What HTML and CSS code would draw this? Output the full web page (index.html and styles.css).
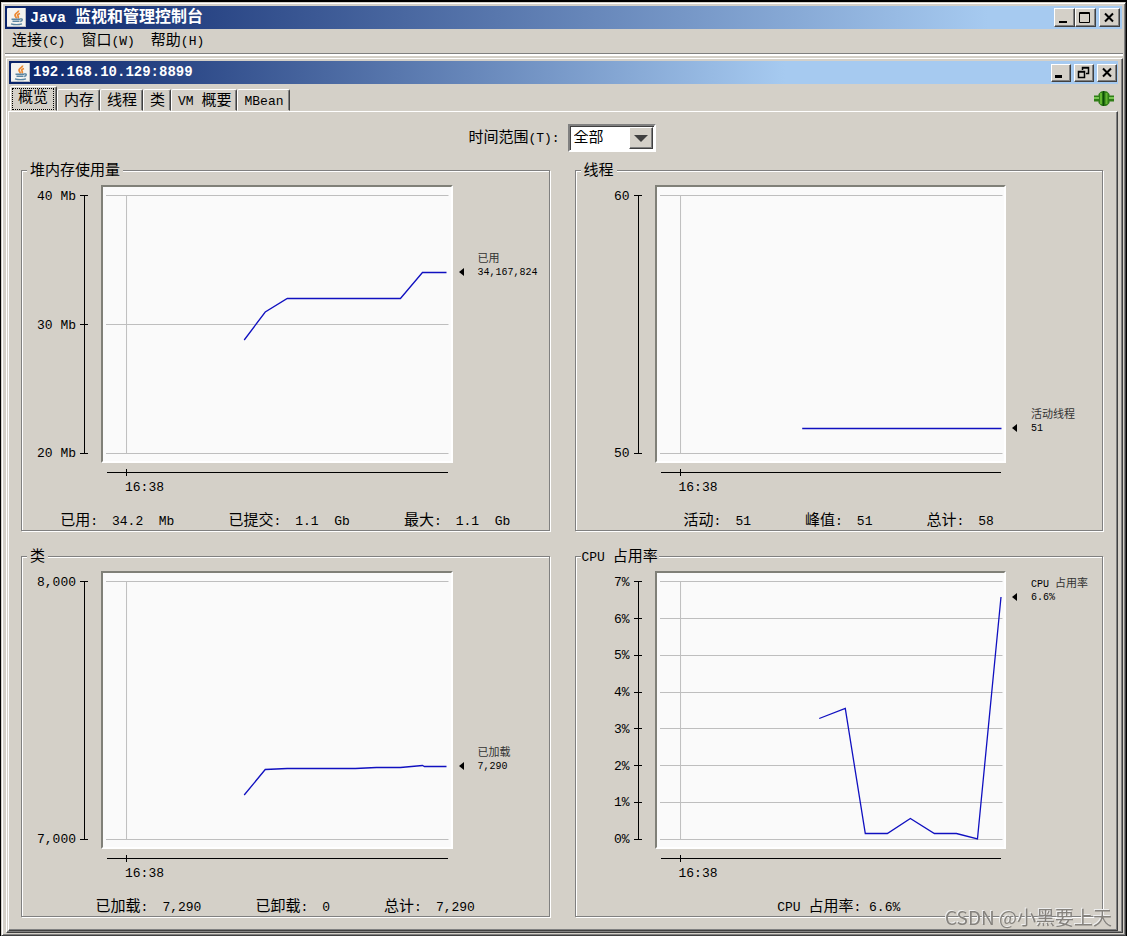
FILE: index.html
```html
<!DOCTYPE html>
<html lang="zh-CN">
<head>
<meta charset="utf-8">
<title>Java 监视和管理控制台</title>
<link rel="stylesheet" href="styles.css">
</head>
<body>
<svg class="defs" aria-hidden="true">
  <symbol id="java" viewBox="0 0 19 19">
    <rect width="19" height="19" rx="1" fill="#f3f3f0"/>
    <path d="M0 18.500h19M18.500 0v19" stroke="#b9bcc4"/>
    <path d="M11.500 2.500c.5 2.200-4.500 2.800-3.300 5.300.4.900 1.300 1.400.8 2.500M13 5.500c-2.300.6-2.800 1.800-1.800 3 .4.700.2 1.200-.5 1.800" fill="none" stroke="#ec8a34" stroke-width="1.800"/>
    <path d="M4.500 11.300h8.500M5.500 13.300h7M13 11c3-.6 3 1.600.2 2.500M4 15.800c3 .9 8 .9 11 0" fill="none" stroke="#5b86a2" stroke-width="1.400"/>
  </symbol>
</svg>
<div class="window">
  <header class="titlebar">
    <svg class="logo"><use href="#java"/></svg>
    <h1>Java <span class="big">监视和管理控制台</span></h1>
    <button type="button" aria-label="最小化"><svg viewBox="0 0 16 15"><path d="M3 12h8" stroke="#000" stroke-width="2"/></svg></button>
    <button type="button" aria-label="最大化"><svg viewBox="0 0 16 15"><path d="M2.500 2.500h10v10h-10zM2 3.500h11" fill="none" stroke="#000"/></svg></button>
    <button type="button" class="close" aria-label="关闭"><svg viewBox="0 0 16 15"><path d="M4 3.500l8 8M12 3.500l-8 8" stroke="#000" stroke-width="2"/></svg></button>
  </header>
  <nav class="menu">
    <button type="button">连接<span class="m">(C)</span></button>
    <button type="button">窗口<span class="m">(W)</span></button>
    <button type="button">帮助<span class="m">(H)</span></button>
  </nav>
  <main class="frame">
    <header class="titlebar inner">
      <svg class="logo"><use href="#java"/></svg>
      <h2>192.168.10.129:8899</h2>
      <button type="button" aria-label="最小化"><svg viewBox="0 0 16 13"><path d="M2 10.500h7" stroke="#000" stroke-width="3"/></svg></button>
      <button type="button" aria-label="还原"><svg viewBox="0 0 16 13"><path d="M6.500 4V1.500h6v6H10M6 2h7M2.500 5.500h6v6h-6zM2 6h7" fill="none" stroke="#000" stroke-width="1.500"/></svg></button>
      <button type="button" aria-label="关闭"><svg viewBox="0 0 16 13"><path d="M4 2.500l8 8M12 2.500l-8 8" stroke="#000" stroke-width="2"/></svg></button>
    </header>
    <nav class="tabs" role="tablist">
      <button type="button" role="tab" aria-selected="true" class="on"><span class="focus">概览</span></button>
      <button type="button" role="tab">内存</button>
      <button type="button" role="tab">线程</button>
      <button type="button" role="tab">类</button>
      <button type="button" role="tab"><span class="m">VM </span>概要</button>
      <button type="button" role="tab"><span class="m">MBean</span></button>
      <svg class="plug" viewBox="0 0 20 15">
        <path d="M0 4.500h4.500V3L7 .5Q10-.5 13 .5L15.500 3v1.500H20v6h-4.500V12L13 14.500q-3 1-6 0L4.500 12v-1.500H0z" fill="#2f7d17"/>
        <path d="M0 7h5M15 7h5" stroke="#79c653" stroke-width="2"/>
        <path d="M7 2v11M12.500 2v11" stroke="#62b530" stroke-width="2"/>
        <path d="M9.500 0v15" stroke="#0c4b06" stroke-width="1.500"/>
      </svg>
    </nav>
    <div class="pane">
      <div class="range">
        <label for="range">时间范围<span class="m">(T):</span></label>
        <span class="combo">
          <select id="range"><option>全部</option></select>
          <span class="drop"><svg viewBox="0 0 14 7"><path d="M0 0h14L7 7z" fill="#404040"/></svg></span>
        </span>
      </div>
      <div class="charts">
        <fieldset>
          <legend>堆内存使用量</legend>
          <div class="chart">
            <div class="yaxis">
              <div class="ylabels"><span>40 Mb</span><span>30 Mb</span><span>20 Mb</span></div>
              <svg class="axis"><path d="M4.500 0v2000"/><line x1="0" x2="8" y1="0.500" y2="0.500"/><line x1="0" x2="8" y1="50%" y2="50%"/><line class="end" x1="0" x2="8" y1="100%" y2="100%"/></svg>
            </div>
            <div class="plot"><svg viewBox="0 0 347 274" preserveAspectRatio="none">
              <path class="grid" d="M3 8.500h342M3 137.500h342M3 266.500h342M23.500 8v258"/>
              <polyline points="141,153 162,125 184,111.500 297,111.500 319,85.500 343,85.500"/>
            </svg></div>
            <div class="side" style="padding-top:68px"><svg viewBox="0 0 5 8"><path d="M5 0v8L0 4z"/></svg><p><span class="name">已用</span><br>34,167,824</p></div>
            <div class="xaxis"><div class="xline"></div><span>16:38</span></div>
          </div>
          <dl class="stats">
            <div><dt>已用<span class="m">:</span></dt><dd>34.2  Mb</dd></div>
            <div><dt>已提交<span class="m">:</span></dt><dd>1.1  Gb</dd></div>
            <div><dt>最大<span class="m">:</span></dt><dd>1.1  Gb</dd></div>
          </dl>
        </fieldset>

        <fieldset>
          <legend>线程</legend>
          <div class="chart">
            <div class="yaxis">
              <div class="ylabels"><span>60</span><span>50</span></div>
              <svg class="axis"><path d="M4.500 0v2000"/><line x1="0" x2="8" y1="0.500" y2="0.500"/><line class="end" x1="0" x2="8" y1="100%" y2="100%"/></svg>
            </div>
            <div class="plot"><svg viewBox="0 0 347 274" preserveAspectRatio="none">
              <path class="grid" d="M3 8.500h342M3 266.500h342M23.500 8v258"/>
              <polyline points="145,241.500 344,241.500"/>
            </svg></div>
            <div class="side" style="padding-top:224px"><svg viewBox="0 0 5 8"><path d="M5 0v8L0 4z"/></svg><p><span class="name">活动线程</span><br>51</p></div>
            <div class="xaxis"><div class="xline"></div><span>16:38</span></div>
          </div>
          <dl class="stats">
            <div><dt>活动<span class="m">:</span></dt><dd>51</dd></div>
            <div><dt>峰值<span class="m">:</span></dt><dd>51</dd></div>
            <div><dt>总计<span class="m">:</span></dt><dd>58</dd></div>
          </dl>
        </fieldset>

        <fieldset>
          <legend>类</legend>
          <div class="chart">
            <div class="yaxis">
              <div class="ylabels"><span>8,000</span><span>7,000</span></div>
              <svg class="axis"><path d="M4.500 0v2000"/><line x1="0" x2="8" y1="0.500" y2="0.500"/><line class="end" x1="0" x2="8" y1="100%" y2="100%"/></svg>
            </div>
            <div class="plot"><svg viewBox="0 0 347 274" preserveAspectRatio="none">
              <path class="grid" d="M3 8.500h342M3 266.500h342M23.500 8v258"/>
              <polyline points="141,222 162,196.500 184,195.500 252,195.500 273,194.500 297,194.500 319,192.500 321,193.500 343,193.500"/>
            </svg></div>
            <div class="side" style="padding-top:176px"><svg viewBox="0 0 5 8"><path d="M5 0v8L0 4z"/></svg><p><span class="name">已加载</span><br>7,290</p></div>
            <div class="xaxis"><div class="xline"></div><span>16:38</span></div>
          </div>
          <dl class="stats">
            <div><dt>已加载<span class="m">:</span></dt><dd>7,290</dd></div>
            <div><dt>已卸载<span class="m">:</span></dt><dd>0</dd></div>
            <div><dt>总计<span class="m">:</span></dt><dd>7,290</dd></div>
          </dl>
        </fieldset>

        <fieldset>
          <legend class="wide"><span class="m">CPU </span>占用率</legend>
          <div class="chart">
            <div class="yaxis">
              <div class="ylabels"><span>7%</span><span>6%</span><span>5%</span><span>4%</span><span>3%</span><span>2%</span><span>1%</span><span>0%</span></div>
              <svg class="axis"><path d="M4.500 0v2000"/><line x1="0" x2="8" y1="0.500" y2="0.500"/><line x1="0" x2="8" y1="14.300%" y2="14.300%"/><line x1="0" x2="8" y1="28.600%" y2="28.600%"/><line x1="0" x2="8" y1="42.900%" y2="42.900%"/><line x1="0" x2="8" y1="57.100%" y2="57.100%"/><line x1="0" x2="8" y1="71.400%" y2="71.400%"/><line x1="0" x2="8" y1="85.700%" y2="85.700%"/><line class="end" x1="0" x2="8" y1="100%" y2="100%"/></svg>
            </div>
            <div class="plot"><svg viewBox="0 0 347 274" preserveAspectRatio="none">
              <path class="grid" d="M3 8.500h342M3 45.500h342M3 82.500h342M3 119.500h342M3 155.500h342M3 192.500h342M3 229.500h342M3 266.500h342M23.500 8v258"/>
              <polyline points="162,145.500 188,135.500 208,260.500 230,260.500 253,245.500 277,260.500 299,260.500 320,266 343.500,24"/>
            </svg></div>
            <div class="side" style="padding-top:7px"><svg viewBox="0 0 5 8"><path d="M5 0v8L0 4z"/></svg><p>CPU <span class="name">占用率</span><br>6.6%</p></div>
            <div class="xaxis"><div class="xline"></div><span>16:38</span></div>
          </div>
          <p class="stats"><span><span class="m">CPU </span>占用率<span class="m">: 6.6%</span></span></p>
        </fieldset>
      </div>
    </div>
  </main>
</div>
<div class="watermark">CSDN @小黑要上天</div>
</body>
</html>
```
FILE: styles.css
```css
* { box-sizing: border-box; }
body {
  margin: 0;
  min-height: 100vh;
  display: flex;
  padding: 2px 1px 0 1px;
  background: #000;
  color: #000;
  font: 15px/18px "Liberation Mono", "Noto Sans CJK SC", monospace;
}
h1, h2, p, dl, dd { margin: 0; }
button, select { font: inherit; color: inherit; }
.defs { position: absolute; width: 0; height: 0; }
.m { font-size: 13px; white-space: pre; }

.window {
  flex: 1;
  display: flex;
  flex-direction: column;
  padding: 2px 2px 0 3px;
  background: #d4d0c8;
  border: 1px solid;
  border-color: #d4d0c8 #404040 #404040 #d4d0c8;
  box-shadow: inset 1px 1px #fff, inset -1px -1px #808080;
}
.titlebar {
  display: flex;
  align-items: center;
  height: 23px;
  margin: 1px 1px 0 0;
  padding: 0 2px;
  background: linear-gradient(90deg, #0a246a, #a6caf0 88%);
  color: #fff;
}
.logo { width: 19px; height: 19px; }
.titlebar h1, .titlebar h2 { flex: 1; padding: 2px 4px 0; font-size: 15px; line-height: 20px; }
.titlebar h2 { padding: 0 3px 2px; font-size: 14px; }
.big { font-size: 16px; }
.titlebar button {
  width: 21px;
  height: 19px;
  padding: 0;
  background: #d4d0c8;
  border: 1px solid;
  border-color: #fff #404040 #404040 #fff;
  box-shadow: inset -1px -1px #808080;
}
.titlebar button svg { display: block; width: 16px; height: 15px; margin: 1px; }
.titlebar .close { margin-left: 3px; }
.inner { margin: 1px 0 0 1px; padding-right: 1px; background: linear-gradient(90deg, #0a246a, #a6caf0 70%); }
.titlebar.inner button { width: 20px; height: 18px; margin-left: 3px; }
.titlebar.inner button svg { height: 13px; }

.menu {
  display: flex;
  gap: 16px;
  height: 25px;
  padding: 3px 7px 0;
  border-bottom: 1px solid #808080;
  box-shadow: 0 2px #fff;
}
.menu button { padding: 0; border: 0; background: none; line-height: 20px; height: 20px; }

.frame {
  flex: 1;
  display: flex;
  flex-direction: column;
  margin: 4px 0 2px 1px;
  padding: 1px 4px 1px 1px;
  border: 1px solid;
  border-color: #fff #404040 #404040 #fff;
  box-shadow: inset -1px -1px #808080;
}
.tabs { display: flex; align-items: flex-end; height: 27px; padding-left: 2px; }
.tabs button {
  height: 22px;
  padding: 2px 5px 0 6px;
  line-height: 20px;
  background: #d4d0c8;
  border: 1px solid;
  border-color: #fff #404040 transparent #fff;
  border-radius: 2px 2px 0 0;
  box-shadow: inset -1px 0 #808080;
}
.tabs .on { height: 25px; padding: 1px 2px 2px 1px; }
.focus { display: block; height: 22px; padding: 1px 5px; border: 1px dotted #000; line-height: 18px; }
.plug { width: 20px; height: 15px; margin: 0 4px 5px auto; }

.pane {
  flex: 1;
  padding: 12px 14px 10px 12px;
  border: 1px solid;
  border-color: #fff #404040 #404040 #fff;
  box-shadow: inset -1px -1px #808080;
}
.range { display: flex; justify-content: center; align-items: center; gap: 8px; height: 28px; }
.range label { padding-top: 2px; }
.combo { position: relative; }
.combo select {
  display: block;
  width: 88px;
  height: 28px;
  padding: 2px 4px 0;
  appearance: none;
  border: 2px solid;
  border-color: #808080 #fff #fff #808080;
  border-radius: 0;
  background: #fff;
  box-shadow: inset 1px 1px #404040;
}
.drop {
  position: absolute;
  top: 3px;
  right: 3px;
  bottom: 3px;
  display: flex;
  align-items: center;
  padding: 0 4px;
  background: #d4d0c8;
  border: 1px solid;
  border-color: #fff #404040 #404040 #fff;
  box-shadow: inset -1px -1px #808080;
  pointer-events: none;
}
.drop svg { width: 14px; height: 7px; }

.charts { display: grid; grid-template-columns: 1fr 1fr; gap: 16px 25px; padding-top: 9px; }
fieldset {
  min-width: 0;
  margin: 0;
  padding: 6px 0 0;
  border: 1px solid #808080;
  box-shadow: 1px 1px #fff, inset 1px 1px #fff;
}
legend { height: 18px; margin-left: 5px; padding: 2px 3px 0; background: #d4d0c8; }
legend.wide { padding: 2px 1px 0; }
.chart { display: grid; grid-template-columns: 79px 1fr 96px; grid-template-rows: 278px 49px; }
.yaxis { display: flex; justify-content: flex-end; gap: 4px; padding-right: 13px; font-size: 13px; }
.ylabels { display: flex; flex-direction: column; justify-content: space-between; padding: 3px 0 0; line-height: 18px; text-align: right; }
.axis { width: 8px; height: 259px; margin-top: 10px; stroke: #000; shape-rendering: crispEdges; }
.axis .end { stroke-width: 2; }
.plot {
  border: 2px solid;
  border-color: #808078 #fff #fff #808078;
  background: #fafafa;
}
.plot svg { display: block; width: 100%; height: 274px; }
.plot path, .plot polyline { fill: none; vector-effect: non-scaling-stroke; }
.grid { stroke: #bebebe; }
.plot polyline { stroke: #1010c0; stroke-width: 1.300px; }
.side { display: flex; align-items: flex-start; gap: 14px; padding-left: 6px; font-size: 10px; line-height: 13px; white-space: nowrap; }
.side > svg { flex: none; width: 5px; height: 8px; margin-top: 15px; }
.name { color: #333; font-size: 11px; }
.xaxis { grid-column: 2; padding: 6px 5px 0 6px; font-size: 13px; }
.xline {
  height: 7px;
  background:
    linear-gradient(#000, #000) 0 3px / 100% 1px no-repeat,
    linear-gradient(#000, #000) 19px 0 / 1px 7px no-repeat;
}
.xaxis span { display: block; padding: 3px 0 0 18px; }
.stats { display: flex; justify-content: center; gap: 54px; height: 18px; padding-top: 1px; white-space: pre; }
.stats div { display: flex; gap: 14px; }
.stats dd { font-size: 13px; }

.watermark {
  position: fixed;
  right: 15px;
  bottom: 6px;
  color: #85827d;
  font: 19px/26px "Noto Sans CJK SC", sans-serif;
  text-shadow: -1px -1px #eee;
}
```
